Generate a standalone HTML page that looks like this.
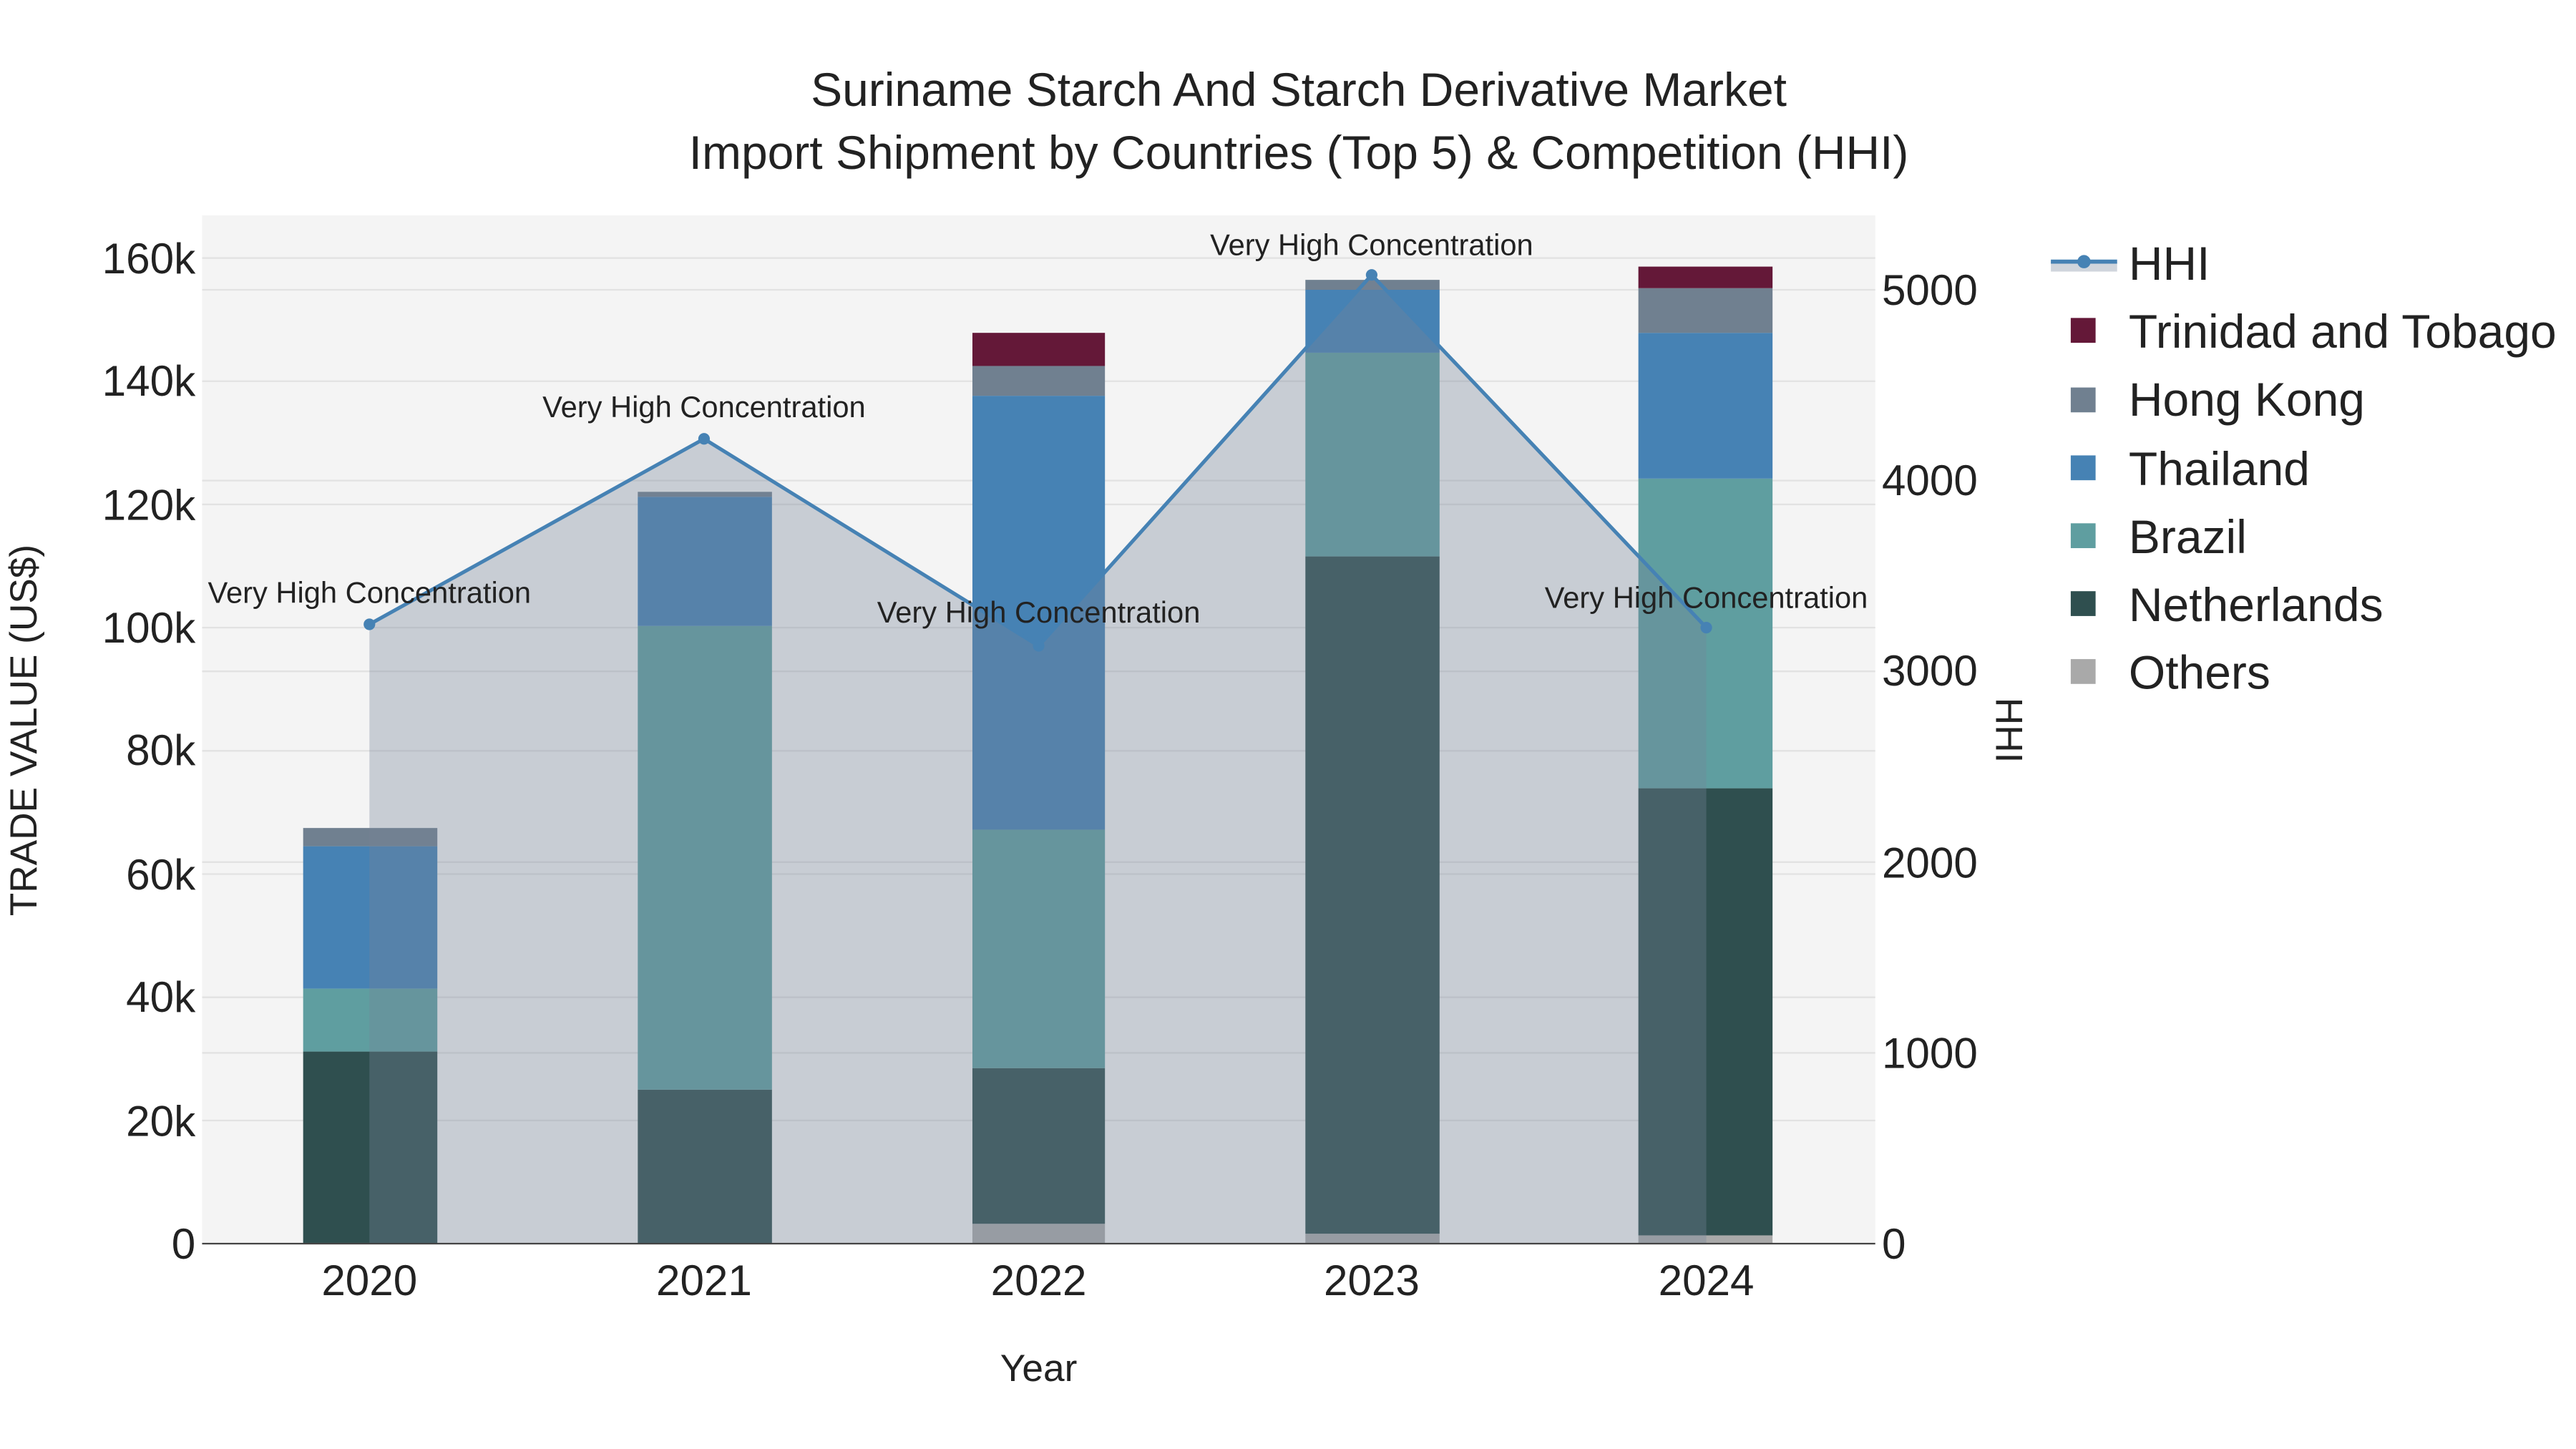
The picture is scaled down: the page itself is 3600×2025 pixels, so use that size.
<!DOCTYPE html>
<html><head><meta charset="utf-8"><style>
html,body{margin:0;padding:0;background:#fff;width:3600px;height:2025px;overflow:hidden}
svg{display:block}
text{font-family:"Liberation Sans",sans-serif;fill:#222}
</style></head><body>
<svg width="3600" height="2025" viewBox="0 0 1555 875" preserveAspectRatio="none" xmlns="http://www.w3.org/2000/svg">
<rect x="0" y="0" width="1555" height="875" fill="#fff"/>
<rect x="122" y="130" width="1010" height="621" fill="#f4f4f4"/>
<g stroke="#e2e2e2" stroke-width="1">
<line x1="122" x2="1132" y1="676.6" y2="676.6"/><line x1="122" x2="1132" y1="602.2" y2="602.2"/>
<line x1="122" x2="1132" y1="527.8" y2="527.8"/><line x1="122" x2="1132" y1="453.4" y2="453.4"/>
<line x1="122" x2="1132" y1="379" y2="379"/><line x1="122" x2="1132" y1="304.6" y2="304.6"/>
<line x1="122" x2="1132" y1="230.2" y2="230.2"/><line x1="122" x2="1132" y1="155.8" y2="155.8"/>
<line x1="122" x2="1132" y1="635.8" y2="635.8"/><line x1="122" x2="1132" y1="520.6" y2="520.6"/>
<line x1="122" x2="1132" y1="405.4" y2="405.4"/><line x1="122" x2="1132" y1="290.2" y2="290.2"/>
<line x1="122" x2="1132" y1="175" y2="175"/>
</g>
<g>
<rect x="183" y="635" width="81" height="116" fill="#2f4f4f"/>
<rect x="183" y="597" width="81" height="38" fill="#5f9ea0"/>
<rect x="183" y="511" width="81" height="86" fill="#4682b4"/>
<rect x="183" y="500" width="81" height="11" fill="#708090"/>

<rect x="385" y="658" width="81" height="93" fill="#2f4f4f"/>
<rect x="385" y="378" width="81" height="280" fill="#5f9ea0"/>
<rect x="385" y="300" width="81" height="78" fill="#4682b4"/>
<rect x="385" y="297" width="81" height="3" fill="#708090"/>

<rect x="587" y="739" width="80" height="12" fill="#a9a9a9"/>
<rect x="587" y="645" width="80" height="94" fill="#2f4f4f"/>
<rect x="587" y="501" width="80" height="144" fill="#5f9ea0"/>
<rect x="587" y="239" width="80" height="262" fill="#4682b4"/>
<rect x="587" y="221" width="80" height="18" fill="#708090"/>
<rect x="587" y="201" width="80" height="20" fill="#641838"/>

<rect x="788" y="745" width="81" height="6" fill="#a9a9a9"/>
<rect x="788" y="336" width="81" height="409" fill="#2f4f4f"/>
<rect x="788" y="213" width="81" height="123" fill="#5f9ea0"/>
<rect x="788" y="175" width="81" height="38" fill="#4682b4"/>
<rect x="788" y="169" width="81" height="6" fill="#708090"/>

<rect x="989" y="746" width="81" height="5" fill="#a9a9a9"/>
<rect x="989" y="476" width="81" height="270" fill="#2f4f4f"/>
<rect x="989" y="289" width="81" height="187" fill="#5f9ea0"/>
<rect x="989" y="201" width="81" height="88" fill="#4682b4"/>
<rect x="989" y="174" width="81" height="27" fill="#708090"/>
<rect x="989" y="161" width="81" height="13" fill="#641838"/>
</g>
<polygon points="223,751 223,377 425,265 627,390 828,166 1030,379 1030,751" fill="rgb(118,133,152)" fill-opacity="0.35"/>
<polyline points="223,377 425,265 627,390 828,166 1030,379" fill="none" stroke="#4682b4" stroke-width="2.2"/>
<g fill="#4682b4"><circle cx="223" cy="377" r="3.5"/><circle cx="425" cy="265" r="3.5"/><circle cx="627" cy="390" r="3.5"/><circle cx="828" cy="166" r="3.5"/><circle cx="1030" cy="379" r="3.5"/></g>
<g font-size="18" text-anchor="middle">
<text x="223" y="364">Very High Concentration</text>
<text x="425" y="252">Very High Concentration</text>
<text x="627" y="376">Very High Concentration</text>
<text x="828" y="154">Very High Concentration</text>
<text x="1030" y="367">Very High Concentration</text>
</g>
<line x1="122" x2="1132" y1="751" y2="751" stroke="#444" stroke-width="1"/>
<g font-size="26" text-anchor="end">
<text x="118" y="760">0</text><text x="118" y="686">20k</text><text x="118" y="611">40k</text>
<text x="118" y="537">60k</text><text x="118" y="462">80k</text><text x="118" y="388">100k</text>
<text x="118" y="314">120k</text><text x="118" y="239">140k</text><text x="118" y="165">160k</text>
</g>
<g font-size="26" text-anchor="start">
<text x="1136" y="760">0</text><text x="1136" y="645">1000</text><text x="1136" y="530">2000</text>
<text x="1136" y="414">3000</text><text x="1136" y="299">4000</text><text x="1136" y="184">5000</text>
</g>
<g font-size="26" text-anchor="middle">
<text x="223" y="782">2020</text><text x="425" y="782">2021</text><text x="627" y="782">2022</text>
<text x="828" y="782">2023</text><text x="1030" y="782">2024</text>
</g>
<text x="627" y="834" font-size="23" text-anchor="middle">Year</text>
<text transform="translate(22,441) rotate(-90)" font-size="23" text-anchor="middle">TRADE VALUE (US$)</text>
<text transform="translate(1205,441) rotate(90)" font-size="23" text-anchor="middle">HHI</text>
<g font-size="28.5" text-anchor="middle">
<text x="784" y="64">Suriname Starch And Starch Derivative Market</text>
<text x="784" y="102">Import Shipment by Countries (Top 5) &amp; Competition (HHI)</text>
</g>
<rect x="1238" y="158" width="40" height="6" fill="#d0d5dc"/>
<line x1="1238" x2="1278" y1="158" y2="158" stroke="#4682b4" stroke-width="2.5"/>
<circle cx="1258" cy="158" r="4" fill="#4682b4"/>
<rect x="1250" y="192" width="15" height="15" fill="#641838"/>
<rect x="1250" y="234" width="15" height="15" fill="#708090"/>
<rect x="1250" y="275" width="15" height="15" fill="#4682b4"/>
<rect x="1250" y="316" width="15" height="15" fill="#5f9ea0"/>
<rect x="1250" y="357" width="15" height="15" fill="#2f4f4f"/>
<rect x="1250" y="398" width="15" height="15" fill="#a9a9a9"/>
<g font-size="28.5">
<text x="1285" y="169">HHI</text>
<text x="1285" y="210">Trinidad and Tobago</text>
<text x="1285" y="251">Hong Kong</text>
<text x="1285" y="293">Thailand</text>
<text x="1285" y="334">Brazil</text>
<text x="1285" y="375">Netherlands</text>
<text x="1285" y="416">Others</text>
</g>
</svg>
</body></html>
